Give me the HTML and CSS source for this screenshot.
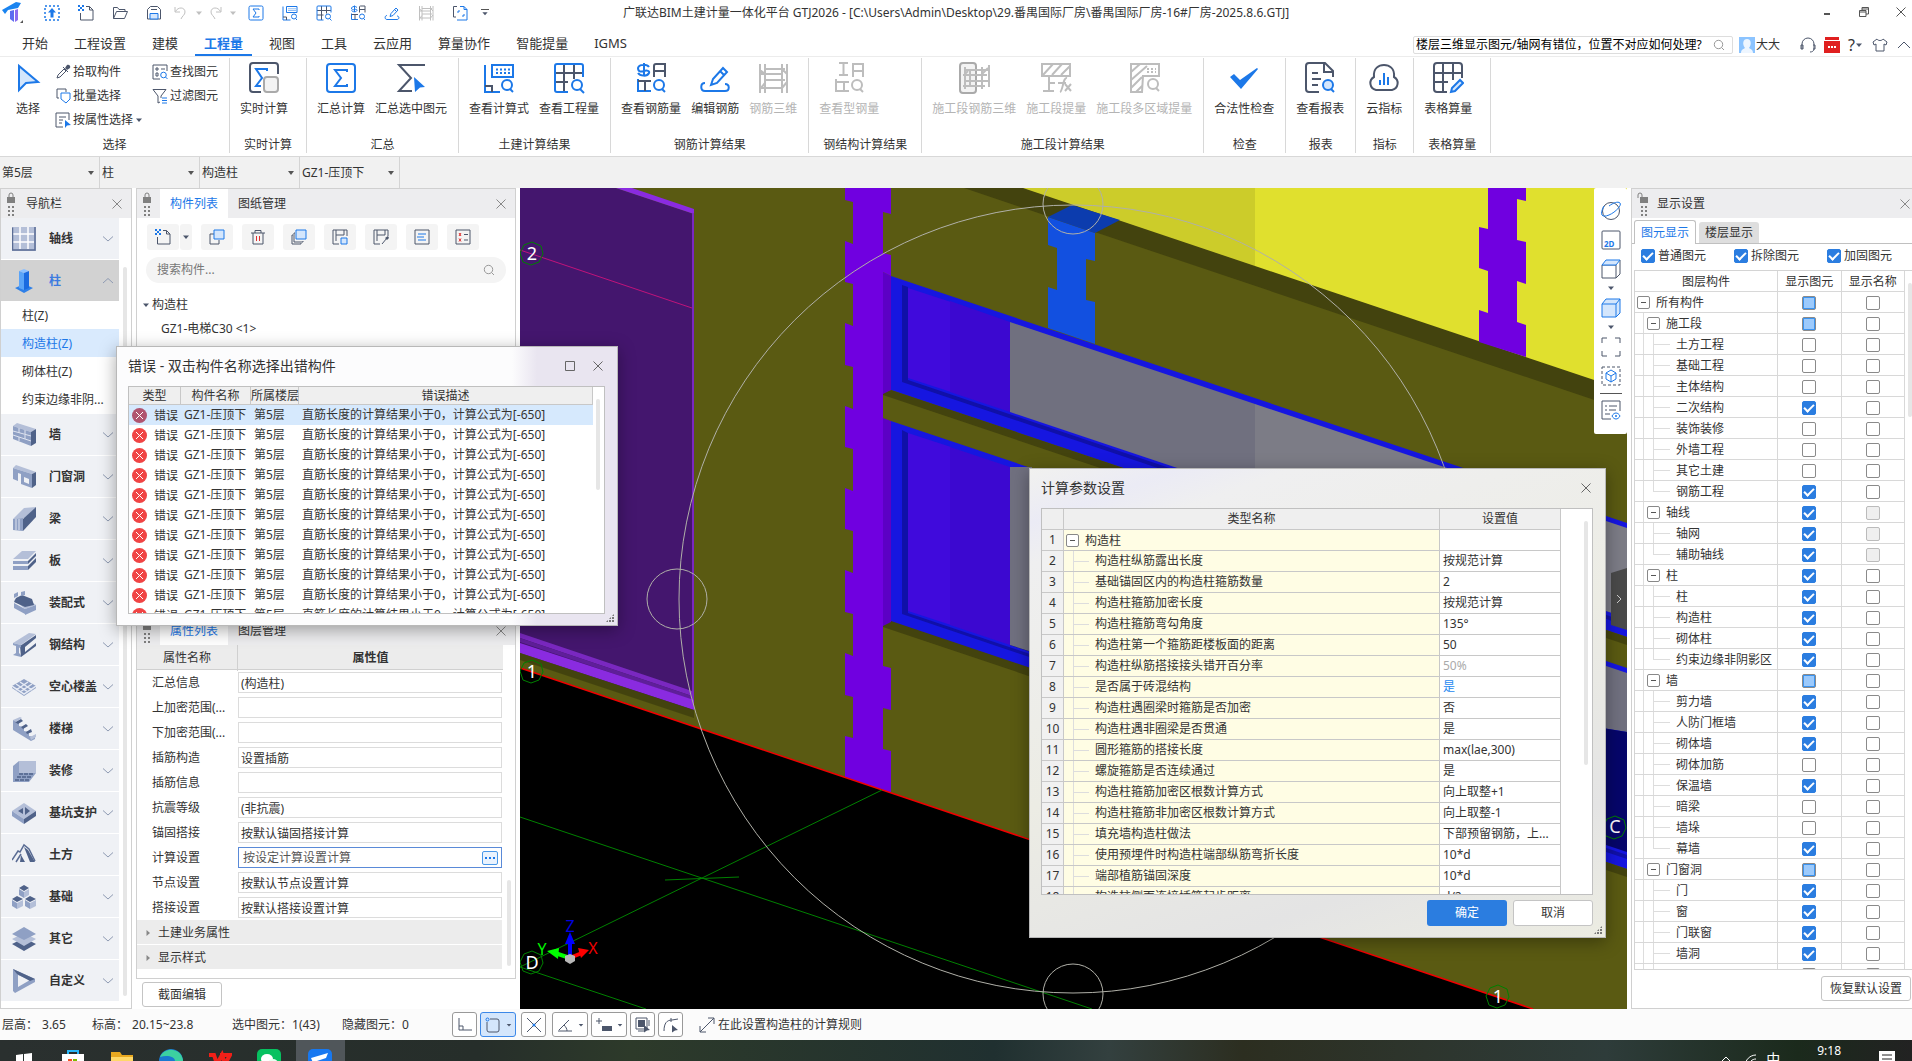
FILE: index.html
```html
<!DOCTYPE html>
<html lang="zh-CN">
<head>
    <meta charset="UTF-8">
    <meta name="viewport" content="width=device-width, initial-scale=1.0">
    <title>广联达BIM土建计量一体化平台 GTJ2026</title>
    <link rel="stylesheet" href="styles.css">
</head>
<body>

    <!-- Shared icons -->
    <svg class="sprite" aria-hidden="true">
        <symbol id="i-close" viewBox="0 0 12 12"><path d="M1.500 1.500l9 9M10.500 1.500l-9 9" /></symbol>
        <symbol id="i-caret" viewBox="0 0 8 8"><path class="fill" d="M1 2.500h6L4 6z" /></symbol>
        <symbol id="i-down" viewBox="0 0 12 12"><path d="M1 3.500l5 4.500 5-4.500" /></symbol>
        <symbol id="i-up" viewBox="0 0 12 12"><path d="M1 8l5-4.500L11 8" /></symbol>
        <symbol id="i-search" viewBox="0 0 12 12"><circle cx="5.500" cy="5.500" r="4.200" /><path d="M8.500 8.500l2.500 2.500" /></symbol>
        <symbol id="i-lock" viewBox="0 0 10 24"><path d="M3 5V3a2 2 0 014 0v2" /><path class="fill" d="M1 5h8v6H1z" /><path class="fill" d="M2 14h2v2H2zM6 14h2v2H6zM2 18h2v2H2zM6 18h2v2H6zM2 22h2v2H2zM6 22h2v2H6z" /></symbol>
        <symbol id="i-unlock" viewBox="0 0 12 24"><path d="M1 6V3a2 2 0 014 0v2" /><path class="fill" d="M3 5h8v6H3z" /><path class="fill" d="M4 14h2v2H4zM8 14h2v2H8zM4 18h2v2H4zM8 18h2v2H8zM4 22h2v2H4zM8 22h2v2H8z" /></symbol>

        <symbol id="i-new" viewBox="0 0 16 16"><path d="M8 1.500h3.500L15 5v10H2.500V8M11.500 1.500V5H15" /><path class="fill-a" d="M0 0h2v2H0zM4 0h2v2H4zM2 2h2v2H2zM0 4h2v2H0zM4 4h2v2H4z" /></symbol>
        <symbol id="i-open" viewBox="0 0 16 16"><path d="M1.500 13.500v-11h4l1.500 2h6v2M1.500 13.500l3-7h11l-3 7z" /></symbol>
        <symbol id="i-save" viewBox="0 0 16 16"><path d="M1.500 14V4.500l3-3h7l3 3V14z" /><path class="soft" d="M4 14V8.500h8V14z" /><path d="M5 4.500h6" /></symbol>
        <symbol id="i-undo" viewBox="0 0 16 16"><path d="M2 2v5h5M2.500 6.500C5 1.500 12 2 12 7c0 3-3 4-4 7" /></symbol>
        <symbol id="i-redo" viewBox="0 0 16 16"><path d="M14 2v5H9M13.500 6.500C11 1.500 4 2 4 7c0 3 3 4 4 7" /></symbol>
        <symbol id="i-upload" viewBox="0 0 16 16"><path class="acc" stroke-dasharray="2 2" stroke-width="1.500" d="M1 1h14v14H1z" /><path class="fill-a" d="M8 3l4 4.500H9.500v5h-3v-5H4z" /></symbol>
        <symbol id="i-scan" viewBox="0 0 16 16"><path d="M5 1.500H1.500V12H4" /><path class="acc" d="M8 1.500h4l3 3V15H5M12 1.500v3h3M6 8V6h2M12 9v2h-2" /></symbol>

        <symbol id="i-sum" viewBox="0 0 32 32"><rect class="acc" x="2" y="2" width="28" height="28" rx="3" /><path class="acc" d="M22 10V8H10l6 8-6 8h12v-2" /></symbol>
        <symbol id="i-live" viewBox="0 0 32 32"><path d="M13 30H5a3 3 0 01-3-3V4a3 3 0 013-3h22a3 3 0 013 3v8" /><path class="acc" d="M19 9V7H8l6 9-6 8h5" /><rect class="grey" x="16" y="15" width="14" height="15" rx="3" /></symbol>
        <symbol id="i-sumsel" viewBox="0 0 32 32"><path d="M30 3H4l12 13L4 29h13" /><path class="fill-a" d="M19 15l11 10-5 .500-5 4.500z" /></symbol>
        <symbol id="i-formula" viewBox="0 0 32 32"><path class="acc" d="M2 3v27h15M9 3h21v12H9z" /><path d="M2 24h7v6" /><path class="acc" stroke-dasharray="2 2" d="M13 7.500h14M13 11h14" /><circle class="acc" cx="24" cy="23" r="5" /><path class="acc" d="M27 27l3 3" /></symbol>
        <symbol id="i-qty" viewBox="0 0 32 32"><path d="M2 11h28M2 20h13M11 2v28M21 2v15" /><path class="acc" d="M15 30H4a2 2 0 01-2-2V4a2 2 0 012-2h24a2 2 0 012 2v11" /><circle class="acc" cx="24" cy="23" r="5" /><path class="acc" d="M27 27l4 4" /></symbol>
        <symbol id="i-rebar" viewBox="0 0 32 32"><path class="acc" d="M9 1v13M14 5c-2-3-10-3-11 1 0 4 3 4 6 3s6 0 5 2c-2 4-9 3-11 0" /><path d="M19 15V4c0-2 1-2 2-2h9v13M19 9h11" /><path class="acc" d="M3 17v12h13" /><path d="M3 19h13M10 19v10" /><circle class="acc" cx="24" cy="23" r="5" /><path class="acc" d="M27 27l3 3" /></symbol>
        <symbol id="i-editbar" viewBox="0 0 32 32"><path class="acc" d="M6 21c-5 0-5 8 0 8h20c5 0 5-7 0-7M12 23l2-6L24 6l4 4-10 11zM21 9l4 4" /></symbol>
        <symbol id="i-bar3d" viewBox="0 0 32 32"><path d="M3 2v29M8 2v29M25 2v29M30 2v29M8 7h20M4 12h21M8 18h20M4 26h21M8 12l-5-4M25 7l5 5M3 27l5-6M25 26l5-6" /></symbol>
        <symbol id="i-steel" viewBox="0 0 32 32"><path d="M6 1h9M6 13h9M10.500 1v12M20 15V2h10v13M20 9h10M3 17v12h13M3 20h13M11 20v9" /><circle cx="24" cy="23" r="5" /><path d="M27 27l3 3" /></symbol>
        <symbol id="i-seg3d" viewBox="0 0 32 32"><rect class="grey" x="2" y="1" width="16" height="30" rx="3" /><path d="M7 5v22M12 7v18M24 5v22M31 3v22M7 8h24M5 13h24M7 19h24M5 24h22M10 9l-4 4M24 12l6-6" /></symbol>
        <symbol id="i-segfx" viewBox="0 0 32 32"><path d="M2 14V2h28v12zM3 13L13 2M12 13L22 2M21 13l9-9M9 14v15M3 29h11M9 21h6" /><path d="M20 30c3-1 3-15 7-14M18 21h8M25 22l6 7M31 22l-6 7" /></symbol>
        <symbol id="i-segmulti" viewBox="0 0 32 32"><path d="M14 30H3V2h28v12H15zM3 10l9-8M3 18L19 4M3 26l11-11M8 30l6-6" /><path stroke-dasharray="2 2" d="M19 7h9M19 10h9" /><circle cx="25" cy="22" r="5" /><path d="M28 26l3 3" /></symbol>
        <symbol id="i-check" viewBox="0 0 32 32"><path class="fill-a" d="M2 15l4-3 6 6L29 6l1 1-17 20z" /></symbol>
        <symbol id="i-report" viewBox="0 0 32 32"><path d="M15 30H5a3 3 0 01-3-3V4a3 3 0 013-3h16l8 8v6M20 1v9h9M8 11h6M8 17h9M8 23h6" /><circle class="soft" cx="24" cy="23" r="5" /><path class="acc" d="M27 27l3 3" /></symbol>
        <symbol id="i-cloud" viewBox="0 0 32 32"><path d="M8 28a7 7 0 01-2-13C5 6 11 3 16 3s11 3 10 12a7 7 0 01-2 13z" /><path class="acc" d="M12 18v5M16 11v12M20 15v8" /></symbol>
        <symbol id="i-tablecalc" viewBox="0 0 32 32"><path d="M15 30H5a3 3 0 01-3-3V4a3 3 0 013-3h22a3 3 0 013 3v12M2 11h28M2 20h14M11 1v29M21 1v17" /><path class="soft" d="M19 30l1-4 8-8 3 3-8 8z" /></symbol>
        <symbol id="i-arrow" viewBox="0 0 32 32"><path class="soft" d="M7 4v24l7-7 12-1z" /></symbol>

        <symbol id="i-pick" viewBox="0 0 16 16"><path d="M2 14l1-3 6-6 2 2-6 6zM8 3l5 5" /><path class="fill" d="M10 4l2-3c2-1 4 1 3 3l-3 2z" /></symbol>
        <symbol id="i-batch" viewBox="0 0 16 16"><path d="M4 10H2V1h9v3" /><path class="acc" d="M6 5h9v6l-4 4-5-4z" /></symbol>
        <symbol id="i-byprop" viewBox="0 0 16 16"><path d="M8 15H1V1h13v7M4 5h7M4 8h4M4 11h3" /><path class="fill-a" d="M10 8l6 5-4 .500-2 2.500z" /></symbol>
        <symbol id="i-find" viewBox="0 0 16 16"><path d="M8 15H1V1h14v6M4 4h2v2H4zM9 5h4M4 9h2v3H4z" /><circle class="acc" cx="11.500" cy="11" r="2.800" /><path class="acc" d="M13.500 13l2 2" /></symbol>
        <symbol id="i-filter" viewBox="0 0 16 16"><path d="M1 1.500h13L9 8v2M6 8v7l2-1M1 1.500L6 8" /><path class="acc" d="M10 10h5M10 12.500h5M10 15h5" /></symbol>

        <symbol id="i-copy" viewBox="0 0 16 16"><path d="M5 5H1v10h9v-4" /><path class="soft" d="M5 1h10v9H5z" /></symbol>
        <symbol id="i-trash" viewBox="0 0 16 16"><path d="M1 4h14M5 4V1.500h6V4M3 4v11h10V4" /><path class="red" d="M6.500 7v5M9.500 7v5" /></symbol>
        <symbol id="i-layers" viewBox="0 0 16 16"><path d="M4 4H3v9h9v-1M2 6H1v9h9v-1" /><path class="soft" d="M5 1h10v9H5z" /></symbol>
        <symbol id="i-hsave" viewBox="0 0 16 16"><path d="M7 15H1V1h14v6M4 1v11M4 6h8V1" /><path class="soft" d="M9 9h6v6H9z" /></symbol>
        <symbol id="i-hpick" viewBox="0 0 16 16"><path d="M7 15H1V1h14v6M4 1v11M4 6h8V1M9 15l5-6" /><path class="fill" d="M12 9l3-2 1 2-2 2z" /></symbol>
        <symbol id="i-text" viewBox="0 0 16 16"><path d="M1 3V1h14v2M1 13v2h14v-2" /><path d="M1 3v10M15 3v10" /><path class="acc" d="M4 5h8M3 8h7M4 11h8" /></symbol>
        <symbol id="i-checklist" viewBox="0 0 16 16"><path d="M1 1h14v14H1zM9 5.500h4M9 11h4" /><path class="red" d="M4 4l2 3M6 4L4 7M4 9.500l2 3M6 9.500l-2 3" /></symbol>

        <symbol id="n-axis" viewBox="0 0 24 24"><path fill="#b4bfd8" d="M0 0h24v24H0z" /><path stroke="#fff" stroke-width="1.500" d="M0 7h22M0 15h22M8 0v22M16 0v22" /><path stroke="#5a6c94" stroke-width="1.500" d="M.500 23.500V.500M0 23h23V0" fill="none" /></symbol>
        <symbol id="n-column" viewBox="0 0 24 24"><path fill="#2f80e8" d="M3 19l9-4 9 4-9 5z" /><path fill="#8cc0ff" d="M7 2l5-2 5 2-5 2z" /><path fill="#5aa4f8" d="M7 2l5 2v17l-5-2z" /><path fill="#1a6ae0" d="M12 4l5-2v17l-5 2z" /></symbol>
        <symbol id="n-wall" viewBox="0 0 24 24"><path fill="#b4bfd8" d="M1 3l4-3 19 6-5 3z" /><path fill="#8fa0c4" d="M1 3l18 6v14L1 16z" /><path fill="#4f6289" d="M19 9l5-3v14l-5 3z" /><path stroke="#dfe4f0" d="M1 8l18 5M1 12l18 6M7 5v5M13 12v4M7 14v4M13 7v4" /></symbol>
        <symbol id="n-door" viewBox="0 0 24 24"><path fill="#b4bfd8" d="M1 3l3-3 20 7-4 2z" /><path fill="#8fa0c4" fill-rule="evenodd" d="M1 3l19 6v14L9 19V9L6 8v8l-5-2zM12 12v5l5 2v-5z" /><path fill="#4f6289" d="M20 9l4-2v13l-4 3z" /></symbol>
        <symbol id="n-beam" viewBox="0 0 24 24"><path fill="#b4bfd8" d="M1 12L12 1l12-1-11 11z" /><path fill="#8fa0c4" d="M1 12l10-1v13l-10-1z" /><path fill="#4f6289" d="M11 12L24 0v10L11 24z" /><path stroke="#dfe4f0" d="M4 12v11M7 12v11" /></symbol>
        <symbol id="n-slab" viewBox="0 0 24 24"><path fill="#b4bfd8" d="M1 10l9-8h14l-8 8z" /><path fill="#8fa0c4" d="M1 12h15v3H1zM1 17h15v4H1z" /><path fill="#4f6289" d="M16 12l8-8v3l-8 8zM16 17l8-8v4l-8 8z" /></symbol>
        <symbol id="n-prefab" viewBox="0 0 24 24"><path fill="#b4bfd8" d="M2 9l10-3 12 8-11 4z" /><path fill="#4f6289" d="M4 7l6-3 10 4 2 6-9 2-11-5z" /><path fill="#8fa0c4" d="M2 12l11 6v5L2 17zM13 18l11-4v5l-11 5zM2 3l4-2v4L2 7zM9 1l4-1v4L9 5z" /></symbol>
        <symbol id="n-steel" viewBox="0 0 24 24"><path fill="#b4bfd8" d="M1 10L17 0l7 1L9 12z" /><path fill="#4f6289" d="M8 13L24 2v3l-11 9v5l11-9v3L9 24z" /><path fill="#8fa0c4" d="M1 10l8 2v2l-2 1v5l2 2v2l-8-2 3-2v-7l-3-1z" /></symbol>
        <symbol id="n-hollow" viewBox="0 0 24 24"><path fill="#8fa0c4" d="M0 11l12-7 12 7v2l-12 8-12-8z" /><path stroke="#e8ecf5" stroke-width="1.500" d="M4 9l12 8M8 7l12 8M4 15l12-8M8 17l12-8M0 11l12 8 12-8" fill="none" /></symbol>
        <symbol id="n-stair" viewBox="0 0 24 24"><path fill="#8fa0c4" d="M1 3l6 2v4l5 1v4l5 1v4l6 1v2l-4 2L1 13z" /><path fill="#4f6289" d="M3 5l6-3 2 2-5 3zM9 10l5-3 2 2-5 3zM14 15l5-3 1 3-5 2z" /><path fill="#b4bfd8" d="M1 3l7-3 2 1-6 4zM18 20l6-3v3l-5 3z" /></symbol>
        <symbol id="n-decor" viewBox="0 0 24 24"><path fill="#b4bfd8" d="M7 2h17v12H7z" /><path fill="#8fa0c4" d="M1 7l6-5v12l-6 9zM7 14h17l-7 9H1z" /><path stroke="#4f6289" stroke-width="1.500" stroke-dasharray="4 1" d="M7 15h15M5 18h15M3 21h15" /></symbol>
        <symbol id="n-pit" viewBox="0 0 24 24"><path fill="#b4bfd8" d="M0 10l12-8 12 8-12 8z" /><path fill="#8fa0c4" d="M0 10l12 8v5L0 15z" /><path fill="#4f6289" d="M12 18l12-8v5l-12 8zM6 10l5-3v6zM13 6l5 4-5 4z" /></symbol>
        <symbol id="n-earth" viewBox="0 0 24 24"><path stroke="#5a6c94" stroke-width="1.500" fill="none" d="M0 17l6-9 2 1 4-7 5 4 6 12M4 19l5-8" /><path fill="#4f6289" d="M12 4l4 3 7 12h-5zM9 12l4 7H8z" /></symbol>
        <symbol id="n-base" viewBox="0 0 24 24"><path fill="#4f6289" d="M7 3l5-3 5 3-5 3zM0 14l5-3 6 3-6 3zM13 14l5-3 6 3-6 3z" /><path fill="#8fa0c4" d="M7 4l5 3v6l-5-3zM0 15l5 3v6l-5-3zM13 15l5 3v6l-5-3z" /><path fill="#b4bfd8" d="M17 4l-5 3v6l5-3zM11 15l-6 3v6l6-3zM24 15l-6 3v6l6-3z" /></symbol>
        <symbol id="n-other" viewBox="0 0 24 24"><path fill="#4f6289" d="M0 17l12-6 12 6-12 7z" /><path fill="#b4bfd8" d="M0 12l12-6 12 6-12 7z" /><path fill="#8fa0c4" d="M0 7l12-7 12 7-12 6z" /></symbol>
        <symbol id="n-custom" viewBox="0 0 24 24"><path fill="#8fa0c4" fill-rule="evenodd" d="M1 0l22 10v3L3 24l-2-2zM6 6v12l12-7z" /><path fill="#4f6289" d="M1 0l22 10-5 2L5 5z" /></symbol>
    </svg>

    <header class="titlebar">
        <div class="quick">
            <svg class="logo" viewBox="0 0 22 22"><path fill="#1a84f0" d="M0 8L14 0l5 1-3 5-10 2-3 4z" /><path fill="#5b6cf0" d="M8 9l4-1v12l-4-3z" /><path fill="#8c6cf0" d="M13 8l3-1v11l-3 2z" /><path fill="#555" d="M21 18v3h-3z" /></svg>
            <button type="button" aria-label="上传"><svg><use href="#i-upload" /></svg></button>
            <button type="button" aria-label="新建"><svg><use href="#i-new" /></svg></button>
            <button type="button" aria-label="打开"><svg><use href="#i-open" /></svg></button>
            <button type="button" aria-label="保存"><svg><use href="#i-save" /></svg></button>
            <button type="button" class="dim" aria-label="撤销"><svg><use href="#i-undo" /></svg><svg class="caret"><use href="#i-caret" /></svg></button>
            <button type="button" class="dim" aria-label="恢复"><svg><use href="#i-redo" /></svg><svg class="caret"><use href="#i-caret" /></svg></button>
            <button type="button" aria-label="汇总"><svg class="thick"><use href="#i-sum" /></svg></button>
            <button type="button" aria-label="计算式"><svg class="thick"><use href="#i-formula" /></svg></button>
            <button type="button" aria-label="工程量"><svg class="thick"><use href="#i-qty" /></svg></button>
            <button type="button" aria-label="钢筋量"><svg class="thick"><use href="#i-rebar" /></svg></button>
            <button type="button" aria-label="编辑钢筋"><svg class="thick"><use href="#i-editbar" /></svg></button>
            <button type="button" class="dim" aria-label="钢筋三维"><svg class="thick"><use href="#i-bar3d" /></svg></button>
            <button type="button" aria-label="识别"><svg><use href="#i-scan" /></svg></button>
            <button type="button" class="more" aria-label="更多"><svg class="caret"><use href="#i-caret" /></svg></button>
        </div>
        <div class="app-title">广联达BIM土建计量一体化平台 GTJ2026 - [C:\Users\Admin\Desktop\29.番禺国际厂房\番禺国际厂房-16#厂房-2025.8.6.GTJ]</div>
        <div class="window-buttons">
            <button type="button" aria-label="最小化"><svg viewBox="0 0 12 12"><path stroke-width="2" d="M3 8h6" /></svg></button>
            <button type="button" aria-label="还原"><svg viewBox="0 0 12 12"><path d="M4 4V1.500h6.500V8H8M1.500 4.500H8v6H1.500zM1.500 6H8M4 3h6" /></svg></button>
            <button type="button" aria-label="关闭"><svg><use href="#i-close" /></svg></button>
        </div>
    </header>

    <nav class="tabs">
        <a href="#">开始</a>
        <a href="#">工程设置</a>
        <a href="#">建模</a>
        <a href="#" class="active">工程量</a>
        <a href="#">视图</a>
        <a href="#">工具</a>
        <a href="#">云应用</a>
        <a href="#">算量协作</a>
        <a href="#">智能提量</a>
        <a href="#">IGMS</a>
        <div class="account">
            <label class="help-search"><input type="text" aria-label="搜索帮助" value="楼层三维显示图元/轴网有错位，位置不对应如何处理?"><svg><use href="#i-search" /></svg></label>
            <svg class="avatar" viewBox="0 0 16 16"><path fill="#8cc4ff" d="M0 0h16v16H0z" /><path fill="#eef6ff" d="M2 16c0-4 3-4 4-5C3 7 4 2 8 2s5 5 2 9c1 1 4 1 4 5z" /></svg>
            <span class="user">大大</span>
            <svg class="tool" viewBox="0 0 16 16"><path d="M2 12V7a6 6 0 0112 0v5M1 8h2v4H1zM13 8h2v4h-2M14 12c0 2-2 3-4 3" /></svg>
            <svg class="tool" viewBox="0 0 16 16"><path fill="#e02020" stroke="none" d="M1 0h14v3H1zM0 4h16v12H0z" /><path stroke="#fff" stroke-width="2" stroke-dasharray="2 1" d="M4 10h8" /></svg>
            <span class="help-mark">?<svg class="caret"><use href="#i-caret" /></svg></span>
            <svg class="tool" viewBox="0 0 16 16"><path d="M5 2l-4 3 1 3 2-1v7h8V7l2 1 1-3-4-3c-1 2-5 2-6 0z" /></svg>
            <svg class="tool" viewBox="0 0 16 16"><path d="M2 11l6-6 6 6" /></svg>
        </div>
    </nav>

    <section class="ribbon">
        <div class="group">
            <div class="tools select-tools">
                <button type="button" class="tool-btn select-btn"><svg><use href="#i-arrow" /></svg>选择</button>
                <div class="small-tools">
                    <button type="button"><svg><use href="#i-pick" /></svg>拾取构件</button>
                    <button type="button"><svg><use href="#i-batch" /></svg>批量选择</button>
                    <button type="button"><svg><use href="#i-byprop" /></svg>按属性选择<svg class="caret"><use href="#i-caret" /></svg></button>
                </div>
                <div class="small-tools">
                    <button type="button"><svg><use href="#i-find" /></svg>查找图元</button>
                    <button type="button"><svg><use href="#i-filter" /></svg>过滤图元</button>
                </div>
            </div>
            <div class="group-name">选择</div>
        </div>
        <div class="group">
            <div class="tools"><button type="button" class="tool-btn"><svg><use href="#i-live" /></svg>实时计算</button></div>
            <div class="group-name">实时计算</div>
        </div>
        <div class="group">
            <div class="tools">
                <button type="button" class="tool-btn"><svg><use href="#i-sum" /></svg>汇总计算</button>
                <button type="button" class="tool-btn"><svg><use href="#i-sumsel" /></svg>汇总选中图元</button>
            </div>
            <div class="group-name">汇总</div>
        </div>
        <div class="group">
            <div class="tools">
                <button type="button" class="tool-btn"><svg><use href="#i-formula" /></svg>查看计算式</button>
                <button type="button" class="tool-btn"><svg><use href="#i-qty" /></svg>查看工程量</button>
            </div>
            <div class="group-name">土建计算结果</div>
        </div>
        <div class="group">
            <div class="tools">
                <button type="button" class="tool-btn"><svg><use href="#i-rebar" /></svg>查看钢筋量</button>
                <button type="button" class="tool-btn"><svg><use href="#i-editbar" /></svg>编辑钢筋</button>
                <button type="button" class="tool-btn" disabled><svg><use href="#i-bar3d" /></svg>钢筋三维</button>
            </div>
            <div class="group-name">钢筋计算结果</div>
        </div>
        <div class="group">
            <div class="tools"><button type="button" class="tool-btn" disabled><svg><use href="#i-steel" /></svg>查看型钢量</button></div>
            <div class="group-name">钢结构计算结果</div>
        </div>
        <div class="group">
            <div class="tools">
                <button type="button" class="tool-btn" disabled><svg><use href="#i-seg3d" /></svg>施工段钢筋三维</button>
                <button type="button" class="tool-btn" disabled><svg><use href="#i-segfx" /></svg>施工段提量</button>
                <button type="button" class="tool-btn" disabled><svg><use href="#i-segmulti" /></svg>施工段多区域提量</button>
            </div>
            <div class="group-name">施工段计算结果</div>
        </div>
        <div class="group">
            <div class="tools"><button type="button" class="tool-btn"><svg><use href="#i-check" /></svg>合法性检查</button></div>
            <div class="group-name">检查</div>
        </div>
        <div class="group">
            <div class="tools"><button type="button" class="tool-btn"><svg><use href="#i-report" /></svg>查看报表</button></div>
            <div class="group-name">报表</div>
        </div>
        <div class="group">
            <div class="tools"><button type="button" class="tool-btn"><svg><use href="#i-cloud" /></svg>云指标</button></div>
            <div class="group-name">指标</div>
        </div>
        <div class="group">
            <div class="tools"><button type="button" class="tool-btn"><svg><use href="#i-tablecalc" /></svg>表格算量</button></div>
            <div class="group-name">表格算量</div>
        </div>
    </section>

    <div class="context-bar">
        <select aria-label="楼层"><option>第5层</option></select>
        <select aria-label="构件类别"><option>柱</option></select>
        <select aria-label="构件类型"><option>构造柱</option></select>
        <select aria-label="构件"><option>GZ1-压顶下</option></select>
    </div>

    <main class="workspace">
        <aside class="panel nav-panel">
            <div class="panel-head">
                <svg class="lock"><use href="#i-lock" /></svg>
                <span class="panel-title">导航栏</span>
                <button type="button" class="close" aria-label="关闭导航栏"><svg><use href="#i-close" /></svg></button>
            </div>
            <div class="nav-body">
                <div class="nav-list">
                    <button type="button"><svg><use href="#n-axis" /></svg>轴线<svg class="chev"><use href="#i-down" /></svg></button>
                    <button type="button" class="open"><svg><use href="#n-column" /></svg>柱<svg class="chev"><use href="#i-up" /></svg></button>
                    <div class="nav-sub">
                        <a href="#">柱(Z)</a>
                        <a href="#" class="active">构造柱(Z)</a>
                        <a href="#">砌体柱(Z)</a>
                        <a href="#">约束边缘非阴...</a>
                    </div>
                    <button type="button"><svg><use href="#n-wall" /></svg>墙<svg class="chev"><use href="#i-down" /></svg></button>
                    <button type="button"><svg><use href="#n-door" /></svg>门窗洞<svg class="chev"><use href="#i-down" /></svg></button>
                    <button type="button"><svg><use href="#n-beam" /></svg>梁<svg class="chev"><use href="#i-down" /></svg></button>
                    <button type="button"><svg><use href="#n-slab" /></svg>板<svg class="chev"><use href="#i-down" /></svg></button>
                    <button type="button"><svg><use href="#n-prefab" /></svg>装配式<svg class="chev"><use href="#i-down" /></svg></button>
                    <button type="button"><svg><use href="#n-steel" /></svg>钢结构<svg class="chev"><use href="#i-down" /></svg></button>
                    <button type="button"><svg><use href="#n-hollow" /></svg>空心楼盖<svg class="chev"><use href="#i-down" /></svg></button>
                    <button type="button"><svg><use href="#n-stair" /></svg>楼梯<svg class="chev"><use href="#i-down" /></svg></button>
                    <button type="button"><svg><use href="#n-decor" /></svg>装修<svg class="chev"><use href="#i-down" /></svg></button>
                    <button type="button"><svg><use href="#n-pit" /></svg>基坑支护<svg class="chev"><use href="#i-down" /></svg></button>
                    <button type="button"><svg><use href="#n-earth" /></svg>土方<svg class="chev"><use href="#i-down" /></svg></button>
                    <button type="button"><svg><use href="#n-base" /></svg>基础<svg class="chev"><use href="#i-down" /></svg></button>
                    <button type="button"><svg><use href="#n-other" /></svg>其它<svg class="chev"><use href="#i-down" /></svg></button>
                    <button type="button"><svg><use href="#n-custom" /></svg>自定义<svg class="chev"><use href="#i-down" /></svg></button>
                </div>
                <div class="scroll nav-scroll"></div>
            </div>
        </aside>

        <div class="component-column">
            <section class="panel list-panel">
                <div class="panel-head">
                    <svg class="lock"><use href="#i-lock" /></svg>
                    <button type="button" class="panel-tab active">构件列表</button>
                    <button type="button" class="panel-tab">图纸管理</button>
                    <button type="button" class="close" aria-label="关闭构件列表"><svg><use href="#i-close" /></svg></button>
                </div>
                <div class="list-tools">
                    <div class="split">
                        <button type="button" aria-label="新建"><svg><use href="#i-new" /></svg></button>
                        <button type="button" class="split-caret" aria-label="新建选项"><svg class="caret"><use href="#i-caret" /></svg></button>
                    </div>
                    <button type="button" aria-label="复制"><svg><use href="#i-copy" /></svg></button>
                    <button type="button" aria-label="删除"><svg><use href="#i-trash" /></svg></button>
                    <button type="button" aria-label="层间复制"><svg><use href="#i-layers" /></svg></button>
                    <button type="button" aria-label="存档"><svg><use href="#i-hsave" /></svg></button>
                    <button type="button" aria-label="提取"><svg><use href="#i-hpick" /></svg></button>
                    <button type="button" aria-label="排序"><svg><use href="#i-text" /></svg></button>
                    <button type="button" aria-label="选项"><svg><use href="#i-checklist" /></svg></button>
                </div>
                <label class="list-search"><input type="text" placeholder="搜索构件..." aria-label="搜索构件"><svg><use href="#i-search" /></svg></label>
                <div class="list-tree">
                    <div class="branch"><svg class="caret"><use href="#i-caret" /></svg>构造柱</div>
                    <div class="leaf">GZ1-电梯C30 &lt;1&gt;</div>
                </div>
            </section>

            <section class="panel prop-panel">
                <div class="panel-head">
                    <svg class="lock"><use href="#i-lock" /></svg>
                    <button type="button" class="panel-tab active">属性列表</button>
                    <button type="button" class="panel-tab">图层管理</button>
                    <button type="button" class="close" aria-label="关闭属性列表"><svg><use href="#i-close" /></svg></button>
                </div>
                <div class="prop-body">
                    <div class="prop-grid">
                        <div class="prop-head"><span>属性名称</span><b>属性值</b></div>
                        <label class="prop-row"><span>汇总信息</span><input type="text" value="(构造柱)"></label>
                        <label class="prop-row"><span>上加密范围(...</span><input type="text"></label>
                        <label class="prop-row"><span>下加密范围(...</span><input type="text"></label>
                        <label class="prop-row"><span>插筋构造</span><input type="text" value="设置插筋"></label>
                        <label class="prop-row"><span>插筋信息</span><input type="text"></label>
                        <label class="prop-row"><span>抗震等级</span><input type="text" value="(非抗震)"></label>
                        <label class="prop-row"><span>锚固搭接</span><input type="text" value="按默认锚固搭接计算"></label>
                        <div class="prop-row editing">
                            <label for="calcSetting">计算设置</label>
                            <div class="picker"><input type="text" id="calcSetting" value="按设定计算设置计算"><button type="button" aria-label="打开计算设置"><i></i><i></i><i></i></button></div>
                        </div>
                        <label class="prop-row"><span>节点设置</span><input type="text" value="按默认节点设置计算"></label>
                        <label class="prop-row"><span>搭接设置</span><input type="text" value="按默认搭接设置计算"></label>
                        <button type="button" class="prop-group"><svg class="caret side"><use href="#i-caret" /></svg>土建业务属性</button>
                        <button type="button" class="prop-group"><svg class="caret side"><use href="#i-caret" /></svg>显示样式</button>
                    </div>
                    <div class="scroll prop-scroll"></div>
                </div>
            </section>
            <div class="column-foot"><button type="button" class="plain-btn">截面编辑</button></div>
        </div>

        <section class="viewport">
            <svg class="scene" viewBox="520 188 1107 821" preserveAspectRatio="xMidYMid slice" role="img" aria-label="三维模型">
                <path fill="#5a5a12" d="M520 188h1107v821H520z" />
                <!-- rear wall and its shaded top edge -->
                <path fill="#43430e" d="M964 188h60l603 202v21z" />
                <path fill="#cccc2a" d="M1023 188h232v78z" />
                <path fill="#e0e02e" d="M1255 188h372v203l-372-125z" />
                <path fill="#7000e0" d="M1488 188h38v13l-9-2v41l9 2v42l-9-3v41l9 3v32l-47-15v-32l9 3v-42l-9-3v-41l9 2z" />

                <!-- left opening -->
                <path fill="#44166e" d="M520 188h96l78 26v497l-174-58z" />
                <path fill="#8a2be0" d="M616 188h16l62 21v5z" />
                <path fill="#7a28c0" d="M692 213h2v487h-2zM520 633l172 58v5l-172-58z" />
                <path fill="#5f1f99" d="M520 638l172 58v4l-172-58z" />
                <path fill="#8a2be0" d="M520 643l174 57v10l-174-57z" />
                <path fill="#43430e" d="M520 653l174 57v8l-174-58z" />
                <path stroke="#c0147a" d="M520 250l172 58" />

                <!-- upper window -->
                <path fill="#1616e0" d="M891 276l736 247v114L891 390z" />
                <path fill="#1010a8" d="M902 285l6 2v93l719 242v4L902 382z" />
                <path fill="#400adc" d="M908 288l43 14v90l-43-14z" />
                <path fill="#3c08d0" d="M950 301l60 21v90l-60-20z" />
                <path fill="#70707f" d="M1010 322l245 82v90l-245-82z" />
                <path fill="#7c7c86" d="M1255 404l372 124v90l-372-124z" />
                <path fill="#43430e" d="M883 393l8-3 736 247v8L883 395z" />

                <!-- lower window -->
                <path fill="#1616e0" d="M891 421l736 247v201L891 622z" />
                <path fill="#1010a8" d="M902 430l6 3v180l719 242v4L902 614z" />
                <path fill="#400adc" d="M908 433l43 14v178l-43-14z" />
                <path fill="#3c08d0" d="M950 447l60 20v178l-60-20z" />
                <path fill="#70707f" d="M1010 467l617 206v59l-617-100z" />
                <path fill="#06066a" d="M1010 632l617 100v120l-617-207z" />
                <path fill="#70707f" d="M1010 467h22v185l-22-7z" />
                <path fill="#43430e" d="M883 625l8-4 736 248v8L883 627z" />

                <!-- structural columns -->
                <path fill="#5c00c4" d="M883 272l8 4v114l-8 4zM883 418l8 3v201l-8 4z" />
                <path fill="#7000e0" d="M845 188h46v26l-8-2v41l8 2v21l-8-4v394l8 2v42l-8-2v41l8 2v42l-46-16v-41l8 2v-41l-8-2v-42l8 3v-42l-8-2v-42l8 3v-42l-8-2v-41l8 3v-42l-8-2v-41l8 3v-42l-8-2v-42l8 3v-42l-8-2v-41l8 3v-42l-8-2z" />
                <path fill="#1250e0" d="M1048 217l47 16v28l-9-2v41l9 2v42l-47-16v-41l9 3v-42l-9-3z" />
                <path fill="#0c3cae" d="M1048 217l24-12 48 15-25 13z" />

                <!-- ground and axis grid -->
                <path fill="#000" d="M520 668l1013 341H520z" />
                <path stroke="#f00000" stroke-width="1.500" d="M520 668l1013 341" />
                <path stroke="#008000" d="M520 817l572 192M520 967l362-177M665 880l74-3M520 967l126 42" />
                <g fill="none" stroke="#b0b0a8">
                    <circle cx="1073" cy="599" r="394" />
                    <circle cx="677" cy="599" r="30" />
                    <circle cx="1073" cy="204" r="30" />
                    <circle cx="1073" cy="994" r="30" />
                </g>
                <g fill="none" stroke="#008000">
                    <path d="M532 242l9 4 2 8-4 8-8 3-8-3-3-9 4-8zM532 660l9 4 2 8-4 8-8 3-8-3-3-9 4-8zM532 951l9 4 2 8-4 8-8 3-8-3-3-9 4-8zM1615 816l9 4 2 8-4 8-8 3-8-3-3-9 4-8zM1498 985l9 4 2 8-4 8-8 3-8-3-3-9 4-8z" />
                </g>
                <g class="axis-name">
                    <text x="532" y="260">2</text>
                    <text x="532" y="678">1</text>
                    <text x="532" y="969">D</text>
                    <text x="1615" y="833">C</text>
                    <text x="1498" y="1003">1</text>
                </g>
                <!-- orientation gizmo -->
                <path stroke="#00f" stroke-width="4" d="M570 957v-18" />
                <path fill="#00f" d="M565 944l5-12 5 12z" />
                <path stroke="#0f0" stroke-width="4" d="M567 957l-12-4" />
                <path fill="#0f0" d="M547 951l12-3-1 11z" />
                <path stroke="#f00" stroke-width="4" d="M572 957l10-4" />
                <path fill="#f00" d="M589 950l-11-2 3 10z" />
                <path fill="#b8b8b8" d="M565 956l5-2 5 2v5l-5 3-5-3z" />
                <g class="gizmo-name">
                    <text x="570" y="932" fill="#0000e0">Z</text>
                    <text x="542" y="955" fill="#00f000">Y</text>
                    <text x="593" y="954" fill="#f00000">X</text>
                </g>
            </svg>
            <div class="view-tools">
                <button type="button" aria-label="动态观察"><svg viewBox="0 0 20 20"><circle cx="10" cy="10" r="8.500" /><path class="acc" d="M3 5C-2 14 1 17 8 14S21 4 19 2s-7 0-11 3" /></svg></button>
                <button type="button" aria-label="二维"><svg viewBox="0 0 20 20"><rect x="1" y="1" width="18" height="18" rx="1" /><text x="3" y="17">2D</text></svg></button>
                <button type="button" aria-label="线框"><svg viewBox="0 0 20 20"><path d="M1 6h14v13H1zM15 19l4-4V1" /><path class="soft" d="M1 6l4-5h14l-4 5z" /></svg></button>
                <svg class="caret"><use href="#i-caret" /></svg>
                <button type="button" aria-label="实体"><svg viewBox="0 0 20 20"><path class="soft" d="M1 6l4-5h14v14l-4 4H1zM1 6h14v13M15 6l4-5" /></svg></button>
                <svg class="caret"><use href="#i-caret" /></svg>
                <button type="button" aria-label="全屏"><svg viewBox="0 0 20 20"><path d="M1 6V1h5M14 1h5v5M19 14v5h-5M6 19H1v-5" /></svg></button>
                <button type="button" aria-label="局部三维"><svg viewBox="0 0 20 20"><path stroke-dasharray="3 2" d="M1 1h18v18H1z" /><path class="acc" d="M10 4l5 3v6l-5 3-5-3V7zM5 7l5 3 5-3M10 10v6" /></svg></button>
                <hr>
                <button type="button" aria-label="显示设置"><svg viewBox="0 0 20 20"><path d="M10 19H1V1h18v10M4 6h2M8 6h8M4 10h2M8 10h7M4 14h5" /><path class="acc" d="M11 16c2-4 6-4 8 0-2 4-6 4-8 0z" /><circle class="fill-a" cx="15" cy="16" r="1" /></svg></button>
            </div>
            <button type="button" class="side-handle" aria-label="收起面板"><svg viewBox="0 0 12 12"><path d="M4 2l4 4-4 4" /></svg></button>
        </section>

        <aside class="panel display-panel">
            <div class="panel-head">
                <svg class="lock"><use href="#i-unlock" /></svg>
                <span class="panel-title">显示设置</span>
                <button type="button" class="close" aria-label="关闭显示设置"><svg><use href="#i-close" /></svg></button>
            </div>
            <div class="display-tabs">
                <button type="button" class="active">图元显示</button>
                <button type="button">楼层显示</button>
            </div>
            <div class="display-filters">
                <label><input type="checkbox" checked>普通图元</label>
                <label><input type="checkbox" checked>拆除图元</label>
                <label><input type="checkbox" checked>加固图元</label>
            </div>
            <div class="layer-wrap">
                <table class="layer-table">
                    <thead><tr><th class="c-name">图层构件</th><th class="c-show">显示图元</th><th class="c-show">显示名称</th></tr></thead>
                    <tbody id="layerRows"></tbody>
                </table>
                <div class="scroll layer-scroll"></div>
            </div>
            <div class="display-foot"><button type="button" class="plain-btn">恢复默认设置</button></div>
        </aside>
    </main>

    <footer class="statusbar">
        <span class="stat"><span>层高：</span>3.65</span>
        <span class="stat wide"><span>标高：</span>20.15~23.8</span>
        <span class="stat"><span>选中图元：</span>1(43)</span>
        <span class="stat"><span>隐藏图元：</span>0</span>
        <div class="snap-tools">
            <button type="button" aria-label="正交"><svg viewBox="0 0 16 16"><path d="M2 1v12h13M2 9h4v4" /></svg></button>
            <button type="button" class="on" aria-label="对象捕捉"><svg viewBox="0 0 16 16"><path d="M5 2h7a2 2 0 012 2v9a2 2 0 01-2 2H4a2 2 0 01-2-2V5" /><circle class="acc" cx="2.500" cy="2.500" r="1.500" /></svg><svg class="caret"><use href="#i-caret" /></svg></button>
            <button type="button" class="gap-after" aria-label="交点"><svg viewBox="0 0 16 16"><path d="M1 1l14 14M15 1L1 15" /><circle class="fill-a" cx="8" cy="8" r="1.500" /></svg></button>
            <button type="button" aria-label="角度"><svg viewBox="0 0 16 16"><path d="M1 14h14M2 13L12 3M7 8c2 2 3 4 3 6" /></svg><svg class="caret"><use href="#i-caret" /></svg></button>
            <button type="button" aria-label="偏移"><svg viewBox="0 0 16 16"><path d="M3 1v6M0 4h6" /><path class="fill" d="M6 9h10v5H6z" /></svg><svg class="caret"><use href="#i-caret" /></svg></button>
            <button type="button" aria-label="选择区域"><svg viewBox="0 0 16 16"><path d="M1 1h11v11H1zM14 3v6M3 14h6" /><path class="fill" d="M3 3h7v7H3zM9 8l6 5-3 .500-3 2z" /></svg></button>
            <button type="button" aria-label="折线"><svg viewBox="0 0 16 16"><path d="M1 14C1 6 4 3 9 3l6-1M8 1v4" /><path class="fill" d="M9 8l6 5-3 .500-3 2z" /></svg></button>
        </div>
        <svg class="hint-icon" viewBox="0 0 16 16"><path d="M1 15L15 1M9 1h6v6M1 9v6h6" /></svg>
        <span class="hint">在此设置构造柱的计算规则</span>
    </footer>

    <div class="taskbar">
        <a href="#" aria-label="开始菜单"><svg viewBox="0 0 24 24"><path fill="#fff" d="M4 6l7-1v7H4zM12 5l8-1v8h-8zM4 13h7v7l-7-1zM12 13h8v8l-8-1z" /></svg></a>
        <a href="#" aria-label="应用商店"><svg viewBox="0 0 24 24"><path fill="none" stroke="#29b6f6" stroke-width="2" d="M7 6V2h10v4" /><path fill="#fff" d="M1 5h22v18H1z" /><path fill="#f25022" d="M7 10h4v4H7z" /><path fill="#7fba00" d="M12 10h4v4h-4z" /></svg></a>
        <a href="#" aria-label="文件管理器"><svg viewBox="0 0 24 24"><path fill="#e8a820" d="M1 3h9l2 3h11v17H1z" /><path fill="#ffd868" d="M1 8h22v15H1z" /></svg></a>
        <a href="#" aria-label="浏览器"><svg viewBox="0 0 24 24"><circle cx="12" cy="12" r="12" fill="#1a78d0" /><path fill="#3cd0a0" d="M1 8C6-3 22-1 24 11c0 5-8 5-8 1 0-5-9-6-15-4z" /></svg></a>
        <a href="#" aria-label="文档"><svg viewBox="0 0 24 24"><path fill="none" stroke="#f02018" stroke-width="4" d="M1 6h5l3 9 5-9 3 9 5-9H12" /></svg></a>
        <a href="#" aria-label="聊天"><svg viewBox="0 0 24 24"><rect width="24" height="24" rx="5" fill="#07c160" /><ellipse cx="10" cy="10" rx="6" ry="5" fill="#fff" /><ellipse cx="16" cy="14" rx="5" ry="4" fill="#e8fff0" /></svg></a>
        <a href="#" class="running" aria-label="土建计量"><svg viewBox="0 0 24 24"><rect width="24" height="24" rx="5" fill="#1878f0" /><path fill="#fff" d="M3 9L20 4l-2 5-9 3-3 4zM10 13l4-1v12h-4z" /></svg></a>
        <div class="tray">
            <svg viewBox="0 0 16 16"><path d="M3 11l5-5 5 5" /></svg>
            <svg viewBox="0 0 16 16"><path d="M3 15C3 9 8 4 14 4M7 15c0-4 3-7 7-7" /></svg>
            <span class="ime">中</span>
            <span class="clock">9:18</span>
            <svg class="note" viewBox="0 0 16 16"><path fill="#fff" stroke="none" d="M0 0h16v13H5l-3 3v-3H0z" /><path stroke="#222" d="M3 4h10M3 8h10" /></svg>
        </div>
    </div>

    <section class="dialog error-dialog" role="dialog" aria-labelledby="errTitle">
        <div class="dialog-head">
            <h2 id="errTitle">错误 - 双击构件名称选择出错构件</h2>
            <button type="button" aria-label="最大化"><svg viewBox="0 0 12 12"><path d="M1.500 1.500h9v9h-9z" /></svg></button>
            <button type="button" aria-label="关闭"><svg><use href="#i-close" /></svg></button>
        </div>
        <div class="dialog-table">
            <table class="error-table">
                <thead><tr><th class="e-type">类型</th><th class="e-name">构件名称</th><th class="e-floor">所属楼层</th><th>错误描述</th></tr></thead>
                <tbody id="errorRows"></tbody>
            </table>
            <div class="scroll error-scroll"></div>
        </div>
        <div class="grip"></div>
    </section>

    <section class="dialog param-dialog" role="dialog" aria-labelledby="paramTitle">
        <div class="dialog-head">
            <h2 id="paramTitle">计算参数设置</h2>
            <button type="button" aria-label="关闭"><svg><use href="#i-close" /></svg></button>
        </div>
        <div class="dialog-table">
            <table class="param-table">
                <thead><tr><th class="p-no"></th><th>类型名称</th><th class="p-value">设置值</th></tr></thead>
                <tbody id="paramRows"></tbody>
            </table>
            <div class="scroll param-scroll"></div>
        </div>
        <div class="dialog-foot">
            <button type="button" class="primary-btn">确定</button>
            <button type="button" class="plain-btn">取消</button>
        </div>
        <div class="grip"></div>
    </section>

    <script src="script.js"></script>
</body>
</html>
```
FILE: styles.css
```css
* {
    box-sizing: border-box;
}
html, body {
    height: 100%;
}
body {
    --accent: #1c78e8;
    --ink: #4c566b;
    margin: 0;
    display: flex;
    flex-direction: column;
    overflow: hidden;
    background: #fff;
    color: #333;
    font-family: "Noto Sans", "Noto Sans CJK SC", sans-serif;
    font-size: 12px;
    line-height: 16px;
}
button, input, select {
    font: inherit;
    color: inherit;
}
button {
    padding: 0;
    border: none;
    background: none;
    cursor: pointer;
}
a {
    color: inherit;
    text-decoration: none;
}
table {
    border-collapse: separate;
    border-spacing: 0;
    table-layout: fixed;
}
th {
    font-weight: normal;
}
svg {
    flex: none;
    fill: none;
    stroke: var(--ink);
}
.sprite {
    position: absolute;
    width: 0;
    height: 0;
}
.acc {
    stroke: var(--accent);
}
.soft {
    stroke: var(--accent);
    fill: #d4e6fc;
}
.grey {
    stroke: #aaa;
    fill: #f3f3f3;
}
.red {
    stroke: #e03030;
}
.fill {
    fill: var(--ink);
    stroke: none;
}
.fill-a {
    fill: var(--accent);
    stroke: none;
}
.caret {
    width: 8px;
    height: 8px;
}
.side {
    transform: rotate(-90deg);
}
.scroll {
    width: 4px;
    border-radius: 2px;
    background: #e6e6e6;
}
symbol[id^="n-"] path:not([stroke]) {
    stroke: none;
}

/* title bar */
.titlebar {
    flex: none;
    display: grid;
    grid-template-columns: 1fr auto 1fr;
    align-items: center;
    height: 26px;
}
.quick {
    display: flex;
    align-items: center;
}
.quick button {
    display: flex;
    align-items: center;
    justify-content: center;
    width: 34px;
    height: 24px;
}
.quick svg {
    width: 16px;
    height: 16px;
}
.quick .logo {
    width: 22px;
    height: 22px;
    margin: 0 11px 0 2px;
    stroke: none;
}
.quick .caret {
    width: 8px;
    height: 8px;
    margin-left: 6px;
}
.quick .dim {
    --ink: #c0c0c0;
}
.quick .more {
    width: 16px;
}
.quick .more .caret {
    margin: 0;
    border-top: 1px solid #555;
}
.thick {
    stroke-width: 2;
}
.window-buttons {
    display: flex;
    justify-content: flex-end;
    gap: 25px;
    padding: 0 5px 2px 0;
}
.window-buttons svg {
    display: block;
    width: 12px;
    height: 12px;
    stroke: #555;
}

/* tabs */
.tabs {
    flex: none;
    display: flex;
    align-items: stretch;
    height: 31px;
    padding-left: 13px;
    border-bottom: 1px solid #ececec;
    font-size: 13px;
}
.tabs a {
    display: flex;
    align-items: center;
    margin-right: 8px;
    padding: 6px 9px 0;
    border-bottom: 2px solid transparent;
}
.tabs .active {
    border-color: var(--accent);
    color: var(--accent);
    font-weight: bold;
}
.account {
    display: flex;
    align-items: center;
    margin-left: auto;
    padding-top: 8px;
    font-size: 12px;
}
.help-search {
    display: flex;
    align-items: center;
    width: 320px;
    height: 18px;
    margin-right: 6px;
    padding: 0 7px 0 2px;
    border: 1px solid #ddd;
    border-radius: 2px;
    --ink: #999;
}
.help-search input {
    flex: 1;
    min-width: 0;
    padding: 0;
    border: none;
    color: #000;
}
.help-search svg {
    width: 12px;
    height: 12px;
}
.avatar {
    width: 16px;
    height: 16px;
    stroke: none;
}
.user {
    margin: 0 20px 0 1px;
}
.tool {
    width: 16px;
    height: 16px;
    margin-right: 8px;
}
.help-mark {
    display: flex;
    align-items: center;
    margin-right: 9px;
    font-size: 16px;
}
.tool:last-child {
    margin-right: 0;
}

/* ribbon */
.ribbon {
    flex: none;
    display: flex;
    height: 100px;
    padding: 1px 0 3px;
    border-bottom: 1px solid #d8d8d8;
}
.group {
    display: flex;
    flex-direction: column;
    justify-content: space-between;
    border-right: 1px solid #d8d8d8;
}
.tools {
    display: flex;
    gap: 10px;
    padding: 0 11px 0 10px;
}
.select-tools {
    gap: 9px;
}
.tool-btn {
    display: flex;
    flex-direction: column;
    align-items: center;
    gap: 7px;
    padding-top: 4px;
    white-space: nowrap;
}
.tool-btn svg {
    width: 32px;
    height: 32px;
    stroke-width: 2;
}
.tool-btn:disabled {
    --accent: #bdbdbd;
    --ink: #bdbdbd;
    color: #b4b4b4;
}
.select-btn {
    width: 36px;
}
.small-tools {
    display: flex;
    flex-direction: column;
    padding-top: 2px;
}
.small-tools button {
    display: flex;
    align-items: center;
    gap: 2px;
    height: 24px;
    white-space: nowrap;
}
.small-tools svg {
    width: 16px;
    height: 16px;
}
.small-tools .caret {
    width: 8px;
    height: 8px;
}
.group-name {
    padding: 0 14px;
    text-align: center;
}

/* floor and component selectors */
.context-bar {
    flex: none;
    display: flex;
    height: 31px;
    background: #f1f1f1;
}
.context-bar select {
    width: 100px;
    padding: 0 2px;
    border: none;
    border-right: 1px solid #d4d4d4;
    border-radius: 0;
    appearance: none;
    background: url("data:image/svg+xml,%3Csvg xmlns='http://www.w3.org/2000/svg' width='6' height='4'%3E%3Cpath fill='%23555' d='M0 0h6L3 4z'/%3E%3C/svg%3E") no-repeat right 5px center;
}

/* workspace */
.workspace {
    flex: 1;
    display: flex;
    gap: 4px;
    min-height: 0;
}
.panel {
    display: flex;
    flex-direction: column;
    border: 1px solid #d0d0d0;
    background: #fff;
}
.panel-head {
    flex: none;
    display: flex;
    align-items: center;
    height: 29px;
    background: #ededef;
}
.lock {
    width: 10px;
    height: 24px;
    margin: 0 8px 0 5px;
    --ink: #808080;
}
.panel-title {
    margin-left: 2px;
}
.panel-tab {
    height: 29px;
    padding: 0 10px;
}
.panel-tab.active {
    background: #fff;
    color: var(--accent);
}
.close {
    margin-left: auto;
    padding-right: 8px;
}
.close svg {
    display: block;
    width: 12px;
    height: 12px;
    stroke: #888;
}
.nav-panel {
    flex: none;
    width: 132px;
}
.nav-body {
    flex: 1;
    display: flex;
    min-height: 0;
}
.nav-list {
    width: 118px;
    overflow: hidden;
}
.nav-list button {
    display: flex;
    align-items: center;
    width: 100%;
    height: 41px;
    margin-bottom: 1px;
    padding: 0 5px 0 11px;
    background: #eff1f5;
    font-weight: bold;
}
.nav-list svg {
    width: 24px;
    height: 24px;
    margin-right: 13px;
}
.nav-list .chev {
    width: 12px;
    height: 12px;
    margin: 0 0 0 auto;
    stroke: #8f9bb3;
}
.nav-list .open {
    margin-bottom: 0;
    background: #d2d2d2;
    color: #3c7be0;
}
.nav-sub {
    padding-bottom: 1px;
}
.nav-sub a {
    display: block;
    height: 28px;
    padding-left: 21px;
    line-height: 29px;
    white-space: nowrap;
}
.nav-sub .active {
    background: #d9eafd;
    color: var(--accent);
}
.nav-scroll {
    margin: 49px 0 12px 4px;
}
.component-column {
    flex: none;
    display: flex;
    flex-direction: column;
    width: 380px;
}
.list-panel {
    flex: 1;
    margin-bottom: 3px;
}
.list-tools {
    display: flex;
    gap: 9px;
    padding: 6px 10px 7px;
}
.list-tools button {
    display: flex;
    align-items: center;
    justify-content: center;
    width: 32px;
    height: 26px;
    border-radius: 3px;
    background: #f4f4f4;
}
.list-tools svg {
    width: 16px;
    height: 16px;
}
.list-tools .caret {
    width: 8px;
    height: 8px;
}
.split {
    display: flex;
    gap: 1px;
}
.list-tools .split-caret {
    width: 12px;
}
.list-search {
    display: flex;
    align-items: center;
    height: 26px;
    margin: 0 9px;
    padding: 0 11px;
    border-radius: 13px;
    background: #f4f4f4;
    --ink: #999;
}
.list-search input {
    flex: 1;
    padding: 0;
    border: none;
    background: none;
}
.list-search input::placeholder {
    color: #777;
}
.list-search svg {
    width: 12px;
    height: 12px;
}
.list-tree {
    padding: 10px 5px;
    line-height: 24px;
}
.branch {
    display: flex;
    align-items: center;
    gap: 2px;
}
.leaf {
    padding-left: 19px;
}
.prop-body {
    display: flex;
    padding-bottom: 8px;
}
.prop-grid {
    width: 366px;
}
.prop-head {
    display: grid;
    grid-template-columns: 100px 1fr;
    height: 25px;
    border-bottom: 1px solid #d0d0d0;
    background: #ececec;
    line-height: 26px;
    text-align: center;
}
.prop-head b {
    border-left: 1px solid #d0d0d0;
}
.prop-row {
    display: grid;
    grid-template-columns: 86px 1fr;
    align-items: center;
    height: 25px;
    padding: 0 1px 0 15px;
}
.prop-row > input, .picker {
    width: 100%;
    height: 21px;
    padding: 0 2px;
    border: 1px solid #dcdcdc;
    background: #fff;
}
.prop-row > .picker {
    display: flex;
    align-items: center;
    padding: 0 3px 0 4px;
    border-color: #5a8ad8;
}
.picker input {
    flex: 1;
    padding: 0;
    border: none;
    color: #555;
}
.picker button {
    display: flex;
    align-items: center;
    justify-content: center;
    gap: 2px;
    width: 16px;
    height: 14px;
    border: 1px solid #4a98e8;
    border-radius: 2px;
    background: #eaf3fe;
}
.picker i {
    width: 2px;
    height: 2px;
    background: var(--accent);
}
.prop-group {
    display: flex;
    align-items: center;
    gap: 6px;
    width: 365px;
    height: 24px;
    margin-bottom: 1px;
    padding: 1px 0 0 7px;
    background: #ececec;
    --ink: #888;
}
.prop-scroll {
    height: 86px;
    margin: auto 0 4px 4px;
}
.column-foot {
    padding: 3px 6px 2px;
}
.plain-btn {
    width: 80px;
    height: 25px;
    border: 1px solid #c4c4c4;
    border-radius: 3px;
    background: #fff;
}

/* 3D view */
.viewport {
    flex: 1;
    position: relative;
    min-width: 0;
    overflow: hidden;
}
.scene {
    display: block;
    width: 100%;
    height: 100%;
    stroke: none;
}
.axis-name text {
    fill: #fff;
    font-size: 18px;
    text-anchor: middle;
}
.gizmo-name text {
    font-size: 16px;
    text-anchor: middle;
}
.view-tools {
    position: absolute;
    top: 0;
    right: 0;
    display: flex;
    flex-direction: column;
    align-items: center;
    width: 33px;
    padding: 13px 0 5px;
    border-radius: 2px;
    background: #fff;
}
.view-tools button {
    margin-bottom: 9px;
}
.view-tools button svg {
    display: block;
    width: 20px;
    height: 20px;
}
.view-tools text {
    fill: var(--accent);
    stroke: none;
    font-size: 8px;
    font-weight: bold;
}
.view-tools .caret {
    margin: -4px 0 6px;
}
.view-tools hr {
    width: 22px;
    margin: -2px 0 6px;
    border: none;
    border-top: 1px solid #555;
}
.side-handle {
    position: absolute;
    top: 380px;
    right: 0;
    display: flex;
    align-items: center;
    width: 16px;
    height: 62px;
    background: #4a4a4a;
    clip-path: polygon(0 5px, 100% 0, 100% 100%, 0 57px);
}
.side-handle svg {
    width: 12px;
    height: 12px;
    margin-left: 2px;
    stroke: #ccc;
}

/* display settings */
.display-panel {
    flex: none;
    width: 281px;
    border-right: none;
}
.display-panel .lock {
    width: 12px;
    margin-right: 6px;
}
.display-panel .close {
    padding-right: 1px;
}
.display-tabs {
    flex: none;
    display: flex;
    align-items: flex-end;
    gap: 3px;
    height: 26px;
    padding-left: 2px;
    border-bottom: 1px solid #c0c0c0;
}
.display-tabs button {
    height: 21px;
    padding: 0 6px;
    border-radius: 3px 3px 0 0;
    background: #dedede;
}
.display-tabs .active {
    height: 24px;
    margin-bottom: -1px;
    border: 1px solid #c0c0c0;
    border-bottom: none;
    background: #fff;
    color: var(--accent);
}
.display-filters {
    flex: none;
    display: flex;
    gap: 28px;
    height: 26px;
    padding: 0 9px 2px;
}
.display-filters label {
    display: flex;
    align-items: center;
    gap: 3px;
}
input[type="checkbox"] {
    display: inline-grid;
    place-content: center;
    width: 14px;
    height: 14px;
    margin: 0;
    border: 1px solid #8a8a8a;
    border-radius: 2px;
    appearance: none;
    background: #fff;
    vertical-align: middle;
}
input[type="checkbox"]:checked {
    border-color: #2b7de0;
    background: #2b7de0;
}
input[type="checkbox"]:checked::before {
    content: "";
    width: 8px;
    height: 4px;
    margin-bottom: 2px;
    border-left: 2px solid #fff;
    border-bottom: 2px solid #fff;
    transform: rotate(-45deg);
}
input[type="checkbox"]:indeterminate::before {
    content: "";
    width: 10px;
    height: 10px;
    border: 1px solid #3c94f0;
    background: #9ccafc;
}
input[type="checkbox"]:disabled {
    border-color: #bbb;
    background: #efefef;
}
.layer-wrap {
    flex: 1;
    display: flex;
    justify-content: space-between;
    min-height: 0;
    margin-left: 2px;
    overflow: hidden;
    border: 1px solid #d4d4d4;
    border-right: none;
}
.layer-table {
    width: 270px;
    height: max-content;
}
.layer-table th, .layer-table td {
    height: 21px;
    padding: 0;
    border-right: 1px solid #d8d8d8;
    border-bottom: 1px solid #d8d8d8;
    text-align: center;
}
.layer-table th {
    padding-top: 2px;
}
.layer-table .c-name {
    width: 143px;
}
.layer-table td.c-name {
    text-align: left;
    white-space: nowrap;
}
.c-name span {
    vertical-align: middle;
}
.layer-table .lv0 {
    padding-left: 2px;
}
.layer-table .lv1 {
    padding-left: 12px;
    background: linear-gradient(#ddd, #ddd) 8px 0 / 1px 100% no-repeat;
}
.layer-table .lv2 {
    padding-left: 41px;
    background:
        linear-gradient(#ddd, #ddd) 8px 0 / 1px 100% no-repeat,
        linear-gradient(#ddd, #ddd) 18px 0 / 1px 100% no-repeat,
        linear-gradient(#ddd, #ddd) 18px 50% / 17px 1px no-repeat;
}
.layer-table .last {
    background:
        linear-gradient(#ddd, #ddd) 8px 0 / 1px 100% no-repeat,
        linear-gradient(#ddd, #ddd) 18px 0 / 1px 50% no-repeat,
        linear-gradient(#ddd, #ddd) 18px 50% / 17px 1px no-repeat;
}
.toggle {
    width: 13px;
    height: 13px;
    margin-right: 6px;
    border: 1px solid #888;
    border-radius: 2px;
    background: linear-gradient(#555, #555) center / 5px 1px no-repeat #fff;
    vertical-align: middle;
}
.layer-scroll {
    height: 134px;
    margin-top: 12px;
}
.display-foot {
    padding: 6px 1px 7px;
    text-align: right;
}
.display-foot .plain-btn {
    width: 90px;
}

/* status bar */
.statusbar {
    flex: none;
    display: flex;
    align-items: center;
    height: 31px;
    padding-left: 2px;
    background: #fbfbfb;
}
.stat {
    display: flex;
    gap: 4px;
    min-width: 90px;
}
.stat.wide {
    min-width: 140px;
}
.stat:nth-child(n+3) {
    gap: 0;
    min-width: 110px;
}
.snap-tools {
    display: flex;
    gap: 3px;
}
.snap-tools button {
    display: flex;
    align-items: center;
    gap: 5px;
    height: 25px;
    padding: 0 3px 0 4px;
    border: 1px solid #999;
    border-radius: 3px;
    background: #fff;
}
.snap-tools .on {
    border-color: #3c88e8;
    background: #d4e6fc;
}
.snap-tools .gap-after {
    margin: 0 3px 0 2px;
}
.snap-tools svg, .hint-icon {
    width: 16px;
    height: 16px;
}
.snap-tools .caret {
    width: 6px;
    height: 8px;
}
.hint-icon {
    margin: 0 3px 0 16px;
}

/* task bar, cut by the bottom of the screen */
.taskbar {
    flex: none;
    display: flex;
    height: 21px;
    overflow: hidden;
    background: linear-gradient(90deg, #2a302f 0%, #262e2a 25%, #2d3a2a 33%, #203030 52%, #33403f 58%, #2c2e20 65%, #2e3c3a 84%, #1b2a1c 94%, #222 100%);
    color: #fff;
}
.taskbar a {
    width: 49px;
    padding: 9px 12px 0;
}
.taskbar a svg {
    width: 24px;
    height: 24px;
    stroke: none;
}
.taskbar .running {
    margin-left: 2px;
    background: #50565a;
}
.tray {
    display: flex;
    gap: 8px;
    margin-left: auto;
    padding-right: 17px;
}
.tray svg {
    width: 16px;
    height: 16px;
    margin-top: 11px;
    stroke: #fff;
}
.ime {
    padding-top: 11px;
    font-size: 14px;
}
.clock {
    margin: 3px 30px 0 29px;
}

/* floating dialogs */
.dialog {
    position: absolute;
    border: 1px solid #b8b8b8;
    box-shadow: 0 4px 16px rgba(0, 0, 0, 0.35);
}
.dialog-head {
    display: flex;
    align-items: center;
    gap: 16px;
    height: 39px;
    padding: 0 13px 2px 11px;
}
.dialog-head h2 {
    margin: 0 auto 0 0;
    font-size: 14px;
    font-weight: normal;
}
.dialog-head svg {
    display: block;
    width: 12px;
    height: 12px;
    stroke: #666;
}
.dialog-table {
    display: flex;
    justify-content: space-between;
    margin: 0 12px 0 11px;
    overflow: hidden;
    border: 1px solid #c0c0c0;
    background: #fff;
}
.dialog-table table {
    height: max-content;
}
.dialog-table th {
    background: #efefef;
    border-right: 1px solid #c8c8c8;
    border-bottom: 1px solid #c8c8c8;
}
.dialog-table th, .dialog-table td {
    padding: 0;
    white-space: nowrap;
}
.grip {
    position: absolute;
    right: 3px;
    bottom: 3px;
    width: 8px;
    height: 8px;
    background: radial-gradient(circle at 1px 1px, #777 1px, transparent 1px) 0 0 / 3px 3px;
    clip-path: polygon(100% 0, 100% 100%, 0 100%);
}
.error-dialog {
    left: 116px;
    top: 346px;
    width: 502px;
    height: 280px;
    background: linear-gradient(90deg, #fcfcfd 79%, #e9e5f0 84%);
}
.error-dialog .dialog-table {
    height: 228px;
}
.error-table {
    width: 464px;
}
.error-table th {
    height: 18px;
    line-height: 17px;
}
.error-table td {
    height: 20px;
    padding-left: 3px;
}
.error-table tr.current {
    background: #d6e9fd;
}
.e-type {
    width: 52px;
}
.e-name {
    width: 70px;
}
.e-floor {
    width: 48px;
}
.error-table svg {
    width: 15px;
    height: 15px;
    margin-right: 7px;
    vertical-align: middle;
}
.error-table .e-type span {
    vertical-align: middle;
}
.bad {
    fill: #f04444;
    stroke: none;
}
.current .bad {
    fill: #b05470;
}
.bad-x {
    stroke: #fff;
}
.error-scroll {
    height: 91px;
    margin: 12px 4px 0 0;
}
.param-dialog {
    left: 1029px;
    top: 468px;
    width: 577px;
    height: 470px;
    background: linear-gradient(160deg, #f1f1ef 0%, #ebebf5 8%, #efeff0 14%, #ecece4 50%, #e4e4e4 80%, #ecece2 100%);
}
.param-dialog .dialog-table {
    height: 387px;
}
.param-table {
    width: 519px;
}
.param-table th, .param-table td {
    height: 21px;
    border-right: 1px solid #c8c8c8;
    border-bottom: 1px solid #c8c8c8;
}
.p-no {
    width: 22px;
}
.param-table td.p-no {
    background: #f1f1f1;
    text-align: center;
}
.p-value {
    width: 121px;
}
.param-table td.p-value {
    padding-left: 3px;
    overflow: hidden;
    text-overflow: ellipsis;
}
.param-table .muted {
    color: #aaa;
}
.param-table .changed {
    color: #1e88f0;
}
.param-table .root {
    padding-left: 2px;
    background: #fffde4;
}
.param-table .item {
    padding-left: 31px;
    background:
        linear-gradient(#ddd, #ddd) 9px 0 / 1px 100% no-repeat,
        linear-gradient(#ddd, #ddd) 9px 50% / 16px 1px no-repeat,
        #fffde4;
}
.param-table .root span {
    vertical-align: middle;
}
.param-scroll {
    height: 244px;
    margin: 12px 4px 0 0;
}
.dialog-foot {
    display: flex;
    justify-content: flex-end;
    gap: 6px;
    padding: 5px 12px;
}
.dialog-foot button {
    width: 80px;
    height: 26px;
}
.primary-btn {
    border-radius: 3px;
    background: #2b7de0;
    color: #fff;
}
```
FILE: script.js
```js
// [level, name, show element, show name] : 1 on, 0 off, 2 partly, -1 disabled
const layers = [
    [0, "所有构件", 2, 0],
    [1, "施工段", 2, 0],
    [2, "土方工程", 0, 0],
    [2, "基础工程", 0, 0],
    [2, "主体结构", 0, 0],
    [2, "二次结构", 1, 0],
    [2, "装饰装修", 0, 0],
    [2, "外墙工程", 0, 0],
    [2, "其它土建", 0, 0],
    [2, "钢筋工程", 1, 0],
    [1, "轴线", 1, -1],
    [2, "轴网", 1, -1],
    [2, "辅助轴线", 1, -1],
    [1, "柱", 1, 0],
    [2, "柱", 1, 0],
    [2, "构造柱", 1, 0],
    [2, "砌体柱", 1, 0],
    [2, "约束边缘非阴影区", 1, 0],
    [1, "墙", 2, 0],
    [2, "剪力墙", 1, 0],
    [2, "人防门框墙", 1, 0],
    [2, "砌体墙", 1, 0],
    [2, "砌体加筋", 0, 0],
    [2, "保温墙", 1, 0],
    [2, "暗梁", 0, 0],
    [2, "墙垛", 0, 0],
    [2, "幕墙", 1, 0],
    [1, "门窗洞", 2, 0],
    [2, "门", 1, 0],
    [2, "窗", 1, 0],
    [2, "门联窗", 1, 0],
    [2, "墙洞", 1, 0],
    [2, "", 0, 0]
];

const params = [
    ["构造柱", ""],
    ["构造柱纵筋露出长度", "按规范计算"],
    ["基础锚固区内的构造柱箍筋数量", "2"],
    ["构造柱箍筋加密长度", "按规范计算"],
    ["构造柱箍筋弯勾角度", "135°"],
    ["构造柱第一个箍筋距楼板面的距离", "50"],
    ["构造柱纵筋搭接接头错开百分率", "50%", "muted"],
    ["是否属于砖混结构", "是", "changed"],
    ["构造柱遇圈梁时箍筋是否加密", "否"],
    ["构造柱遇非圈梁是否贯通", "是"],
    ["圆形箍筋的搭接长度", "max(lae,300)"],
    ["螺旋箍筋是否连续通过", "是"],
    ["构造柱箍筋加密区根数计算方式", "向上取整+1"],
    ["构造柱箍筋非加密区根数计算方式", "向上取整-1"],
    ["填充墙构造柱做法", "下部预留钢筋，上..."],
    ["使用预埋件时构造柱端部纵筋弯折长度", "10*d"],
    ["端部植筋锚固深度", "10*d"],
    ["构造柱侧面连接插筋起步距离", "d/2"]
];

const toggle = '<button type="button" class="toggle" aria-label="折叠"></button>';

function box(state, label) {
    let attrs = "";
    if (state === 1) attrs = " checked";
    if (state === 2) attrs = ' data-partial="1"';
    if (state === -1) attrs = " disabled";
    return `<td><input type="checkbox" aria-label="${label}"${attrs}></td>`;
}

document.getElementById("layerRows").innerHTML = layers.map((row, i) => {
    const [level, name, shown, named] = row;
    const next = layers[i + 1];
    const last = level === 2 && next && next[0] < 2 ? " last" : "";
    return `<tr><td class="c-name lv${level}${last}">${level < 2 ? toggle : ""}<span>${name}</span></td>`
        + box(shown, name + " 显示图元") + box(named, name + " 显示名称") + "</tr>";
}).join("");

document.querySelectorAll("[data-partial]").forEach(input => {
    input.indeterminate = true;
});

const badIcon = '<svg viewBox="0 0 15 15"><circle class="bad" cx="7.5" cy="7.5" r="7.5" /><path class="bad-x" d="M4 4l7 7M11 4l-7 7" /></svg>';
let errorHtml = "";
for (let i = 0; i < 11; i++) {
    errorHtml += `<tr${i === 0 ? ' class="current"' : ""}><td class="e-type">${badIcon}<span>错误</span></td>`
        + "<td>GZ1-压顶下</td><td>第5层</td><td>直筋长度的计算结果小于0，计算公式为[-650]</td></tr>";
}
document.getElementById("errorRows").innerHTML = errorHtml;

document.getElementById("paramRows").innerHTML = params.map(([name, value, cls], i) =>
    `<tr><td class="p-no">${i + 1}</td>`
    + `<td class="${i ? "item" : "root"}">${i ? "" : toggle}<span>${name}</span></td>`
    + `<td class="p-value ${cls || ""}">${value}</td></tr>`
).join("");
```
